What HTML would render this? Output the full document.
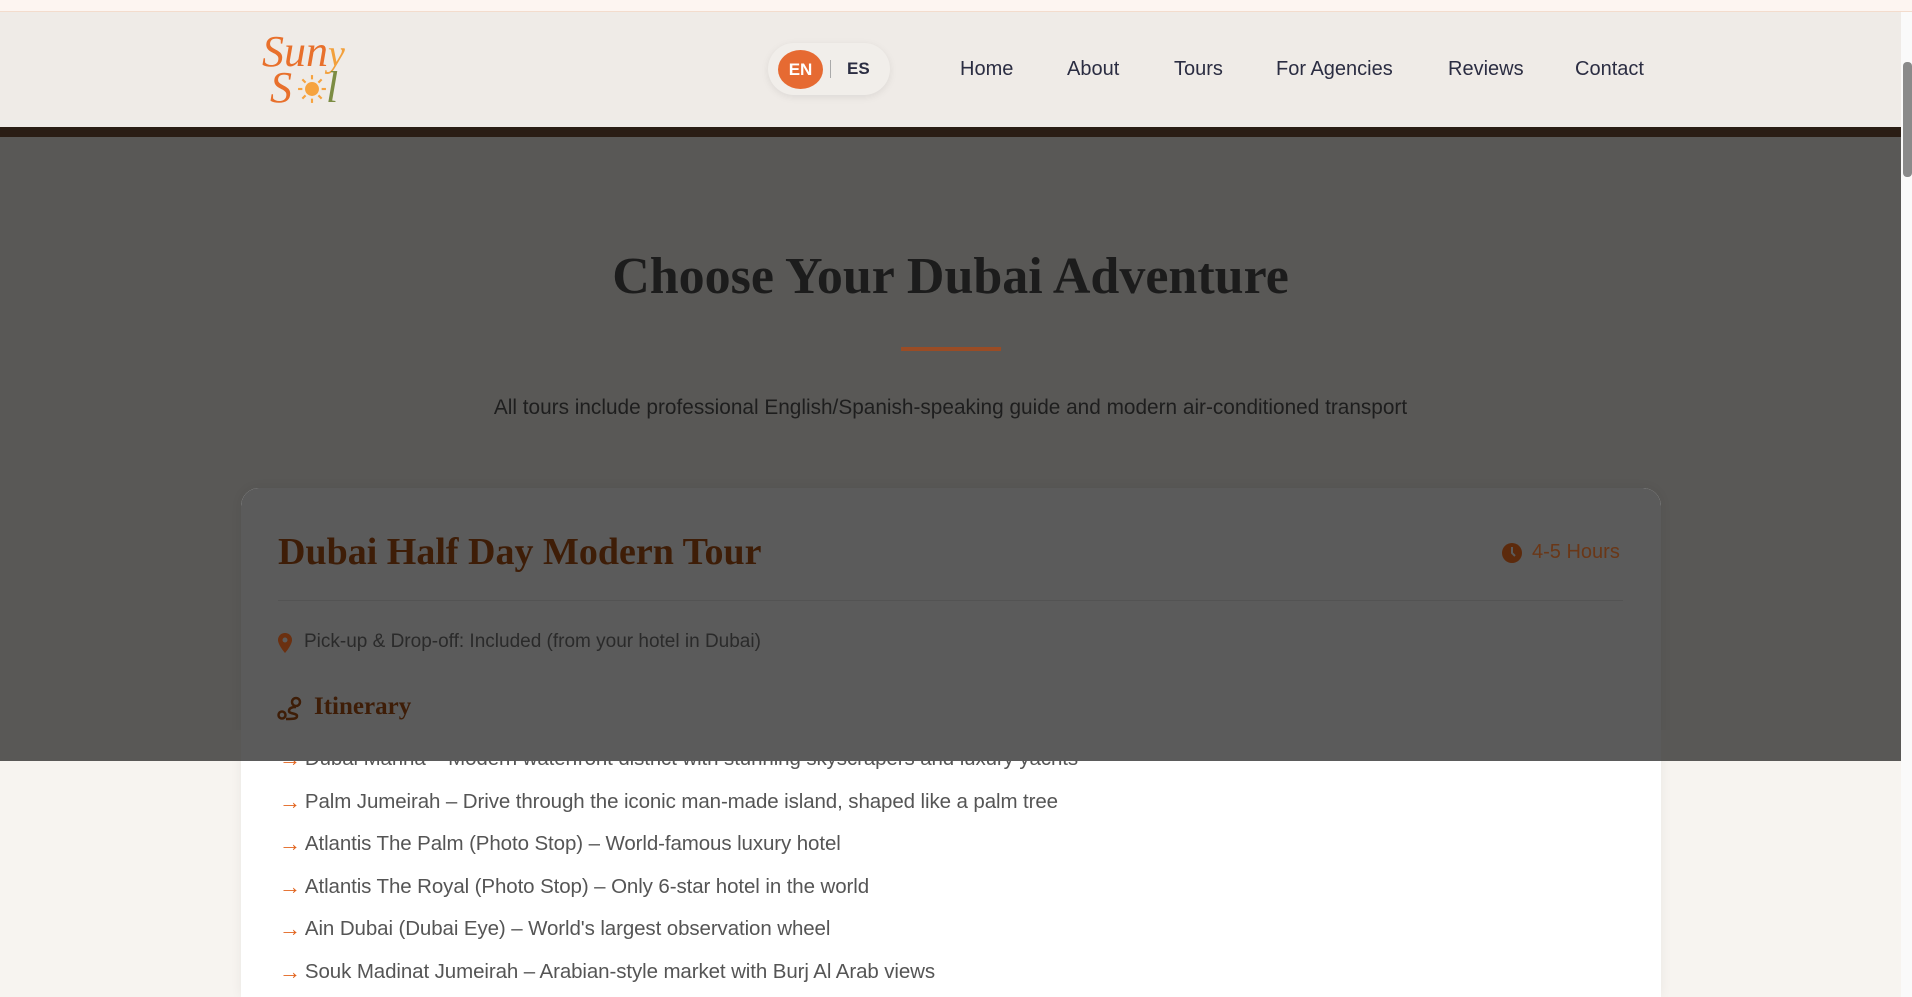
<!DOCTYPE html>
<html style="width:1912px;height:997px;overflow:hidden"><head><meta charset="utf-8"><style>
*{margin:0;padding:0;box-sizing:border-box}
body{width:1912px;height:997px;overflow:hidden;background:#f7f4f0;font-family:"Liberation Sans",sans-serif;position:relative}
.abs{position:absolute}
.top{left:0;top:0;width:1912px;height:12px;background:#fdf5f1;border-bottom:1px solid #f3dccd}
.hdr{left:0;top:12px;width:1901px;height:115px;background:#efebe7}
.band{left:0;top:127px;width:1901px;height:10px;background:#2a1d14}
.ov{left:0;top:137px;width:1901px;height:624px;background:#595856}
.sb{left:1901px;top:12px;width:11px;height:985px;background:#fafafa}
.sbt{left:1903px;top:62px;width:9px;height:115px;background:#8a8a8a;border-radius:4px}
.nav{top:58px;font-size:20px;color:#2b2d42;font-weight:500}
.card{left:241px;top:488px;width:1420px;height:509px;background:#fff;border-radius:18px 18px 0 0;box-shadow:0 0 12px rgba(0,0,0,.06)}
.card .hd{left:0;top:0;width:1420px;height:273px;background:#5b5b5b;border-radius:18px 18px 0 0}
.li{left:279px;font-size:20.5px;color:#555;letter-spacing:-0.1px}
.li b{color:#e2641f;font-weight:normal;margin-right:4px;font-size:22px;vertical-align:-1px}
</style></head><body>
<div class="abs top"></div>
<div class="abs hdr"></div>
<div class="abs band"></div>
<div class="abs ov"></div>
<div class="abs sb"></div><div class="abs sbt"></div>
<div class="abs" style="left:262px;top:30px;font-family:'Liberation Serif',serif;font-style:italic;font-size:44px;color:#e8702c;line-height:44px">Sun<span style="color:#f2a03c;font-size:38px">y</span></div>
<div class="abs" style="left:270px;top:66px;font-family:'Liberation Serif',serif;font-style:italic;font-size:44px;color:#e8702c;line-height:44px">S</div>
<svg class="abs" style="left:297px;top:74px" width="30" height="30" viewBox="0 0 28 28"><circle cx="14" cy="14" r="6.5" fill="#f6a33f"/><g stroke="#f6a33f" stroke-width="2"><line x1="14" y1="1" x2="14" y2="5"/><line x1="14" y1="23" x2="14" y2="27"/><line x1="1" y1="14" x2="5" y2="14"/><line x1="23" y1="14" x2="27" y2="14"/><line x1="5" y1="5" x2="8" y2="8"/><line x1="20" y1="20" x2="23" y2="23"/><line x1="5" y1="23" x2="8" y2="20"/><line x1="20" y1="8" x2="23" y2="5"/></g></svg>
<div class="abs" style="left:326px;top:66px;font-family:'Liberation Serif',serif;font-style:italic;font-size:44px;color:#7c8c43;line-height:44px">l</div>
<div class="abs" style="left:768px;top:43px;width:122px;height:52px;border-radius:26px;background:#f1eeea;box-shadow:0 2px 8px rgba(0,0,0,.08)"></div>
<div class="abs" style="left:778px;top:50px;width:45px;height:39px;border-radius:50%;background:#e66a32;color:#fff;font-weight:bold;font-size:17px;text-align:center;line-height:39px">EN</div>
<div class="abs" style="left:830px;top:60px;width:1px;height:18px;background:#aaa"></div>
<div class="abs" style="left:847px;top:59px;font-size:17px;font-weight:bold;color:#2b2d42">ES</div>
<div class="abs nav" style="left:960px">Home</div>
<div class="abs nav" style="left:1067px">About</div>
<div class="abs nav" style="left:1174px">Tours</div>
<div class="abs nav" style="left:1276px">For Agencies</div>
<div class="abs nav" style="left:1448px">Reviews</div>
<div class="abs nav" style="left:1575px">Contact</div>
<div class="abs" style="left:0;width:1901px;top:247px;text-align:center;font-family:'Liberation Serif',serif;font-weight:bold;font-size:52px;color:#1c1c1c">Choose Your Dubai Adventure</div>
<div class="abs" style="left:901px;top:347px;width:100px;height:4px;background:#9a4c25"></div>
<div class="abs" style="left:0;width:1901px;top:396px;text-align:center;font-size:20.8px;color:#1e1e1e">All tours include professional English/Spanish-speaking guide and modern air-conditioned transport</div>
<div class="abs card"><div class="abs hd"></div></div>
<div class="abs" style="left:278px;top:530px;font-family:'Liberation Serif',serif;font-weight:bold;font-size:38px;color:#3e1d07">Dubai Half Day Modern Tour</div>
<svg class="abs" style="left:1502px;top:543px" width="20" height="20" viewBox="0 0 20 20"><circle cx="10" cy="10" r="10" fill="#5c2a0c"/><path d="M10 4v6l3 3" stroke="#5b5b5b" stroke-width="2" fill="none"/></svg>
<div class="abs" style="left:1532px;top:541px;font-size:20px;color:#6a3717">4-5 Hours</div>
<div class="abs" style="left:278px;top:600px;width:1345px;height:1px;background:#535353"></div>
<svg class="abs" style="left:278px;top:633px" width="14" height="20" viewBox="0 0 14 20"><path d="M7 0C3 0 0 3 0 7c0 5 7 13 7 13s7-8 7-13c0-4-3-7-7-7z" fill="#6b3010"/><circle cx="7" cy="7" r="2.5" fill="#5b5b5b"/></svg>
<div class="abs" style="left:304px;top:631px;font-size:19px;color:#2a2a2a">Pick-up &amp; Drop-off: Included (from your hotel in Dubai)</div>
<svg class="abs" style="left:277px;top:696px" width="26" height="26" viewBox="0 0 26 26"><circle cx="5" cy="19" r="3.5" fill="none" stroke="#3e1d07" stroke-width="2.5"/><circle cx="19" cy="6" r="4" fill="none" stroke="#3e1d07" stroke-width="2.5"/><path d="M19 11c-4 0-7 1-7 4s8 2 8 5-4 3-11 3" fill="none" stroke="#3e1d07" stroke-width="2.5"/></svg>
<div class="abs" style="left:314px;top:693px;font-family:'Liberation Serif',serif;font-weight:bold;font-size:25px;color:#3e1d07">Itinerary</div>
<div class="abs li" style="top:746px"><b>→</b>Dubai Marina – Modern waterfront district with stunning skyscrapers and luxury yachts</div>
<div class="abs" style="left:0;top:730px;width:1901px;height:31px;background:#595856"></div>
<div class="abs" style="left:241px;top:730px;width:1420px;height:31px;background:#5b5b5b"></div>
<div class="abs li" style="top:789px"><b>→</b>Palm Jumeirah – Drive through the iconic man-made island, shaped like a palm tree</div>
<div class="abs li" style="top:831px"><b>→</b>Atlantis The Palm (Photo Stop) – World-famous luxury hotel</div>
<div class="abs li" style="top:874px"><b>→</b>Atlantis The Royal (Photo Stop) – Only 6-star hotel in the world</div>
<div class="abs li" style="top:916px"><b>→</b>Ain Dubai (Dubai Eye) – World's largest observation wheel</div>
<div class="abs li" style="top:959px"><b>→</b>Souk Madinat Jumeirah – Arabian-style market with Burj Al Arab views</div>
</body></html>
